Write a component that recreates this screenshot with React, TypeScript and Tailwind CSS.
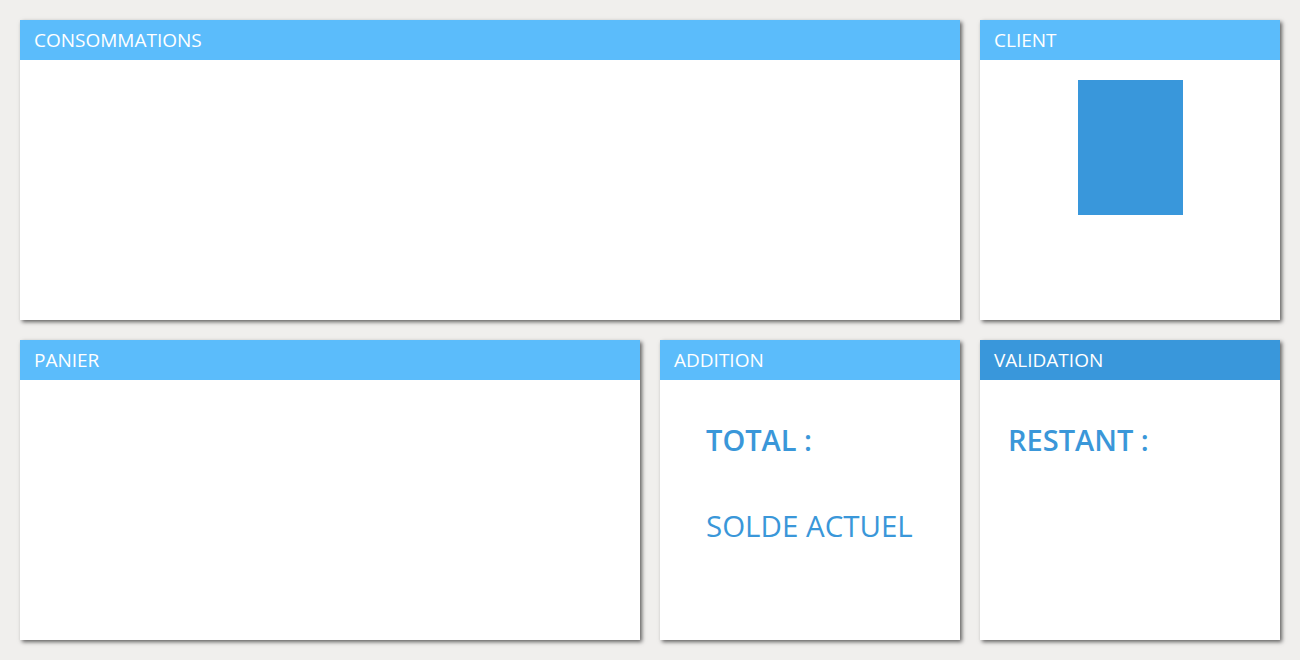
const font = { fontFamily: '"Open Sans", "Liberation Sans", sans-serif' };

function Panel({
  title,
  dark = false,
  className = "",
  children,
}: {
  title: string;
  dark?: boolean;
  className?: string;
  children?: React.ReactNode;
}) {
  return (
    <section className={`flex h-[300px] flex-col bg-white shadow-[2px_2px_4px_rgba(0,0,0,0.6)] ${className}`}>
      <header
        className={`flex h-10 shrink-0 items-center px-[14px] text-[19px] text-white ${
          dark ? "bg-[#3997db]" : "bg-[#5bbcfb]"
        }`}
      >
        {title}
      </header>
      <div className="flex-1">{children}</div>
    </section>
  );
}

export default function App() {
  return (
    <div style={font} className="flex h-[660px] w-[1300px] flex-col gap-5 bg-[#f0efed] p-5">
      <div className="flex gap-5">
        <Panel title="CONSOMMATIONS" className="flex-1" />
        <Panel title="CLIENT" className="w-[300px]">
          <div className="flex justify-center pt-5">
            <div className="h-[135px] w-[105px] bg-[#3997db]" />
          </div>
        </Panel>
      </div>
      <div className="flex gap-5">
        <Panel title="PANIER" className="flex-1" />
        <Panel title="ADDITION" className="w-[300px]">
          <div className="flex flex-col px-[46px] pt-[42px] text-[#3a97d9]">
            <div className="text-[29px] font-semibold leading-[36px]">TOTAL :</div>
            <div className="mt-[50px] text-[29.5px] leading-[36px]">SOLDE ACTUEL</div>
          </div>
        </Panel>
        <Panel title="VALIDATION" dark className="w-[300px]">
          <div className="px-[28px] pt-[42px] text-[29px] font-semibold leading-[36px] text-[#3a97d9]">RESTANT :</div>
        </Panel>
      </div>
    </div>
  );
}
